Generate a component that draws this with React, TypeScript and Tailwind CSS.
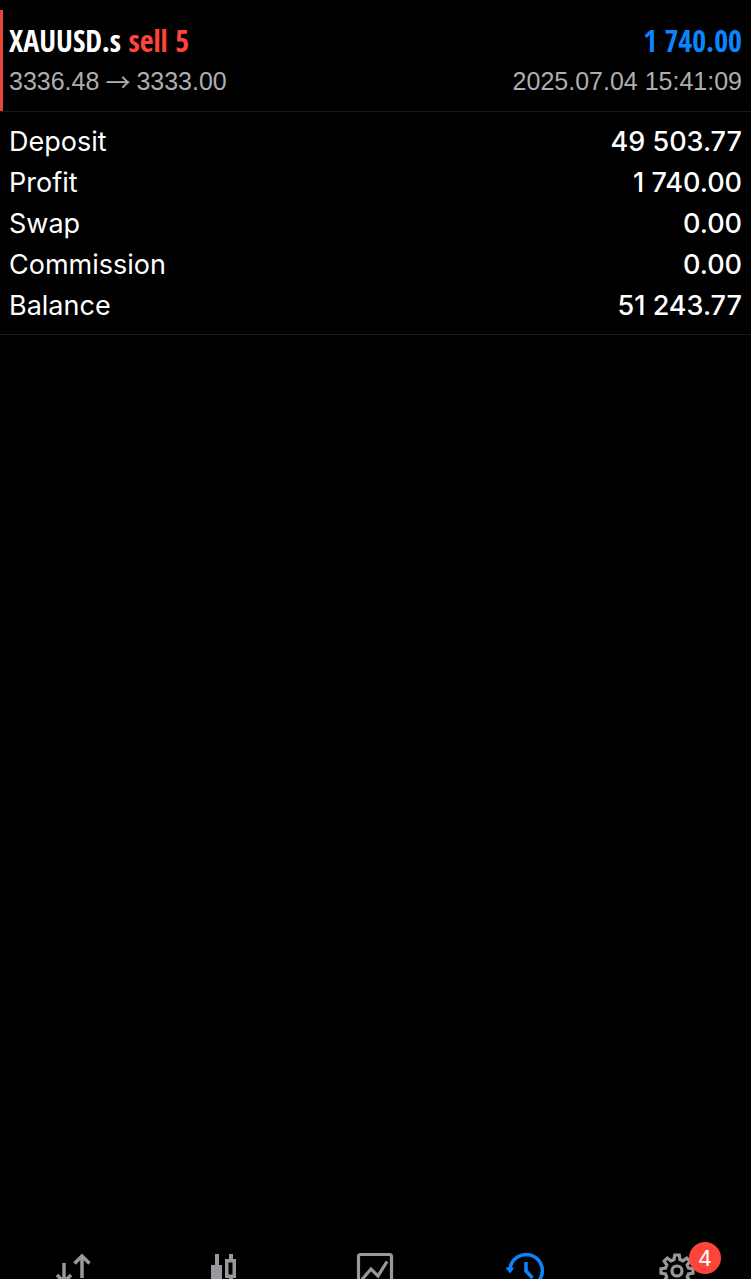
import React from "react";

interface SummaryRow {
  label: string;
  value: string;
}

const summary: SummaryRow[] = [
  { label: "Deposit", value: "49 503.77" },
  { label: "Profit", value: "1 740.00" },
  { label: "Swap", value: "0.00" },
  { label: "Commission", value: "0.00" },
  { label: "Balance", value: "51 243.77" },
];

const QuotesIcon = () => (
  <svg width="40" height="40" viewBox="0 0 40 40" fill="none" stroke="currentColor" strokeWidth="3.5" aria-hidden="true">
    <path d="M9 13v19M2 25l7 7 7-7" />
    <path d="M27 28V6M19.5 13.5 27 6l7.5 7.5" />
  </svg>
);

const CandlesIcon = () => (
  <svg width="40" height="40" viewBox="0 0 40 40" fill="currentColor" aria-hidden="true">
    <path d="M10 4h4v11h3v18h-3v5h-4v-5H6V15h4z" />
    <path fillRule="evenodd" d="M24 4h4v5h3v19h-3v6h-4v-6h-4V9h4zM23.5 12.5v12h4v-12z" />
  </svg>
);

const ChartIcon = () => (
  <svg width="40" height="40" viewBox="0 0 40 40" fill="none" stroke="currentColor" strokeWidth="3.2" aria-hidden="true">
    <rect x="3.5" y="4.5" width="33" height="33" rx="2" />
    <path d="M7 29.500l9-10.500 7 7 9-14.500" />
  </svg>
);

const HistoryIcon = () => (
  <svg width="40" height="40" viewBox="0 0 40 40" fill="none" stroke="currentColor" strokeWidth="3.5" aria-hidden="true">
    <path d="M4 19a16.200 16.200 0 1 1 4.500 13" />
    <path d="M20 12v9l6.500 7" />
    <path d="M-.5 17.500h9L4 23.500z" fill="currentColor" stroke="none" />
  </svg>
);

const GearIcon = () => (
  <svg width="40" height="40" viewBox="-21 -21 40 40" fill="none" stroke="currentColor" strokeWidth="3.2" aria-hidden="true">
    <path d="M-3-11.500-2.200-16H2.200L3-11.500 6-10.200 9.800-12.900 12.900-9.800 10.200-6 11.500-3 16-2.200V2.200L11.500 3 10.200 6 12.900 9.800 9.800 12.900 6 10.200 3 11.500 2.200 16H-2.200L-3 11.500-6 10.200-9.800 12.900-12.900 9.800-10.200 6-11.500 3-16 2.200V-2.200L-11.500-3-10.200-6-12.900-9.800-9.800-12.900-6-10.200z" />
    <circle r="5" />
  </svg>
);

const tabs = [
  { name: "Quotes", icon: <QuotesIcon /> },
  { name: "Charts", icon: <CandlesIcon /> },
  { name: "Trade", icon: <ChartIcon /> },
  { name: "History", icon: <HistoryIcon />, active: true },
  { name: "Settings", icon: <GearIcon />, badge: 4 },
];

const App = () => {
  return (
    <div className="flex h-screen flex-col bg-black font-['Inter',sans-serif] text-white">
      <main className="flex-1 pt-2.5">
        <section className="border-b border-[#1c1c1e]">
          <div className="border-l-3 border-[#e8453c] pt-2.5 pr-[9px] pb-[9px] pl-1.5 leading-[41px]">
            <div className="flex justify-between font-['Open_Sans_Condensed','Roboto_Condensed','Liberation_Sans_Narrow',sans-serif] text-[30px] font-bold">
              <h1>
                XAUUSD.s <span className="text-[#ff453a]">sell 5</span>
              </h1>
              <span className="text-[#0a84ff]">1 740.00</span>
            </div>
            <div className="flex justify-between font-['Liberation_Sans',sans-serif] text-[25px] text-[#aeaeb2]">
              <span className="flex">
                <span>3336.48</span>
                <span className="px-1.5 font-['Noto_Sans_CJK_JP',sans-serif]">→</span>
                <span>3333.00</span>
              </span>
              <time dateTime="2025-07-04T15:41:09">2025.07.04 15:41:09</time>
            </div>
          </div>
        </section>

        <dl className="border-b border-[#1c1c1e] px-[9px] pt-[9px] pb-2 text-[27px] leading-[41px]">
          {summary.map((row) => (
            <div key={row.label} className="flex justify-between">
              <dt>{row.label}</dt>
              <dd className="font-medium">{row.value}</dd>
            </div>
          ))}
        </dl>
      </main>

      <nav className="grid h-[37px] shrink-0 grid-cols-5 overflow-hidden text-[#98989d]">
        {tabs.map((tab) => (
          <a
            key={tab.name}
            href="#"
            aria-label={tab.name}
            className={`flex justify-center pt-2 ${tab.active ? "text-[#0a84ff]" : ""}`}
          >
            <span className="relative">
              {tab.icon}
              {tab.badge && (
                <span className="absolute -top-2 left-[33px] size-8 rounded-full bg-[#ff453a] text-center text-[22px] leading-8 text-white">
                  {tab.badge}
                </span>
              )}
            </span>
          </a>
        ))}
      </nav>
    </div>
  );
};

export default App;
